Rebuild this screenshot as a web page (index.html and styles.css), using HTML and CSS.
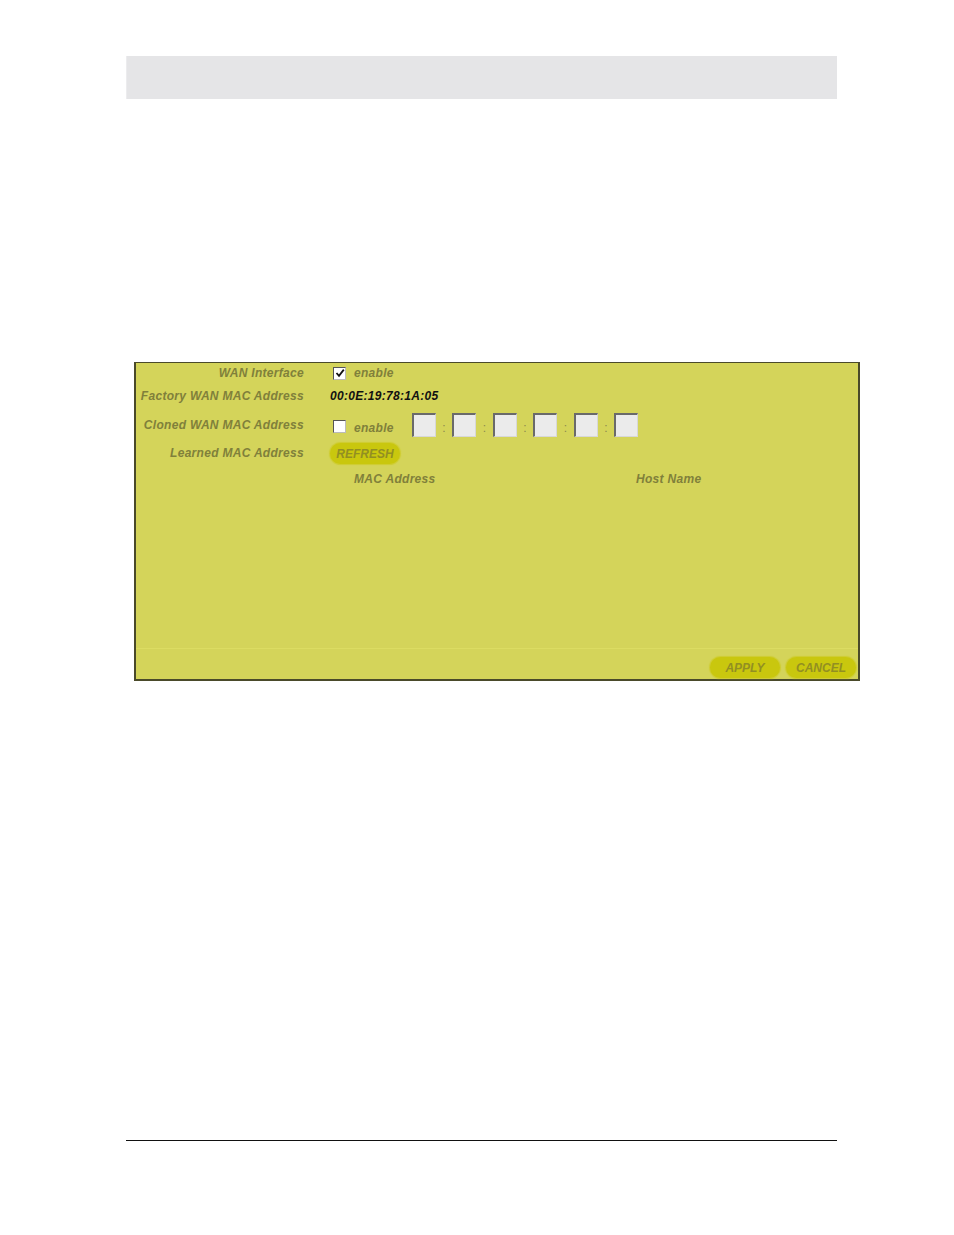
FILE: index.html
```html
<!DOCTYPE html>
<html>
<head>
<meta charset="utf-8">
<link rel="stylesheet" href="styles.css">
</head>
<body>
<div class="page">
  <div class="topbar"></div>
  <div class="panel">
    <div class="row r1">
      <div class="label">WAN Interface</div>
      <div class="value"><span class="cb checked"><svg viewBox="0 0 10 10" width="10" height="10"><path d="M1.5 5 L4 7.8 L8.8 1.6" fill="none" stroke="#111" stroke-width="1.8"/></svg></span><span class="opt">enable</span></div>
    </div>
    <div class="row r2">
      <div class="label">Factory WAN MAC Address</div>
      <div class="value"><span class="mac">00:0E:19:78:1A:05</span></div>
    </div>
    <div class="row r3">
      <div class="label">Cloned WAN MAC Address</div>
      <div class="value">
        <span class="cb"></span><span class="opt">enable</span>
        <div class="octets">
          <span class="box"></span><span class="colon">:</span>
          <span class="box"></span><span class="colon">:</span>
          <span class="box"></span><span class="colon">:</span>
          <span class="box"></span><span class="colon">:</span>
          <span class="box"></span><span class="colon">:</span>
          <span class="box"></span>
        </div>
      </div>
    </div>
    <div class="row r4">
      <div class="label">Learned MAC Address</div>
      <div class="value"><span class="btn refresh">REFRESH</span></div>
    </div>
    <div class="row r5">
      <div class="label"></div>
      <div class="value heads"><span class="h1">MAC Address</span><span class="h2">Host Name</span></div>
    </div>
    <div class="spacer"></div>
    <div class="actions">
      <span class="btn apply">APPLY</span>
      <span class="btn cancel">CANCEL</span>
    </div>
  </div>
  <div class="footline"></div>
</div>
</body>
</html>
```
FILE: styles.css
```css
html, body {
  margin: 0;
  padding: 0;
  background: #ffffff;
}
.page {
  width: 954px;
  height: 1235px;
  font-family: "Liberation Sans", Arial, sans-serif;
}
.topbar {
  margin: 56px 0 0 126px;
  width: 711px;
  height: 43px;
  background: #e5e5e7;
  border-left: 1px solid #ececee;
  box-sizing: border-box;
}
.panel {
  margin: 263px 0 0 134px;
  width: 726px;
  height: 319px;
  box-sizing: border-box;
  background: #d4d45a;
  border: 2px solid #4a4a2a;
  border-top-width: 1px;
  display: flex;
  flex-direction: column;
}
.row {
  display: flex;
  align-items: center;
}
.r1 { height: 18px; margin-top: 1px; }
.r2 { height: 28px; }
.r3 { height: 30px; }
.r4 { height: 26px; }
.r5 { height: 26px; }
.label {
  width: 168px;
  text-align: right;
  font-size: 12px;
  font-weight: bold;
  font-style: italic;
  color: #80803a;
  letter-spacing: 0.3px;
  white-space: nowrap;
}
.value {
  margin-left: 26px;
  display: flex;
  align-items: center;
  font-size: 12px;
  font-weight: bold;
  font-style: italic;
  color: #80803a;
  letter-spacing: 0.3px;
}
.cb {
  width: 11px;
  height: 11px;
  background: #ffffff;
  border-top: 1px solid #555;
  border-left: 1px solid #555;
  border-right: 1px solid #bbb;
  border-bottom: 1px solid #bbb;
  margin-left: 3px;
  display: inline-flex;
  align-items: center;
  justify-content: center;
}
.r3 .cb { margin-top: 3px; }
.opt {
  margin-left: 8px;
}
.r3 .opt { margin-top: 5px; }
.mac {
  color: #111;
  font-size: 12px;
  letter-spacing: 0.3px;
}
.octets {
  display: flex;
  align-items: center;
  margin-left: 18px;
}
.box {
  width: 24px;
  height: 24px;
  box-sizing: border-box;
  background: #ebebeb;
  border-top: 2px solid #6a6a6a;
  border-left: 2px solid #6a6a6a;
  border-right: 1px solid #d8d8d8;
  border-bottom: 1px solid #d8d8d8;
}
.colon {
  width: 16.5px;
  text-align: center;
  color: #8a8a50;
  font-style: normal;
  font-weight: normal;
  font-size: 12px;
  margin-top: 6px;
}
.btn {
  display: inline-flex;
  align-items: center;
  justify-content: center;
  height: 21px;
  border-radius: 11px;
  background: #c9c70e;
  color: #928f22;
  font-size: 12px;
  font-weight: bold;
  font-style: italic;
  letter-spacing: 0px;
  box-shadow: 0 0 1px 1px #cfcd30;
}
.refresh {
  width: 70px;
  margin-top: 1px;
}
.heads {
  margin-left: 50px;
}
.h1 { width: 282px; }
.spacer {
  flex: 1;
  border-bottom: 1px solid #dcdc62;
  margin-bottom: 8px;
}
.actions {
  display: flex;
  justify-content: flex-end;
  gap: 6px;
  padding: 0 2px 1px 0;
}
.apply, .cancel { width: 70px; }
.footline {
  margin: 459px 0 0 126px;
  width: 711px;
  height: 1px;
  background: #111;
}
```
